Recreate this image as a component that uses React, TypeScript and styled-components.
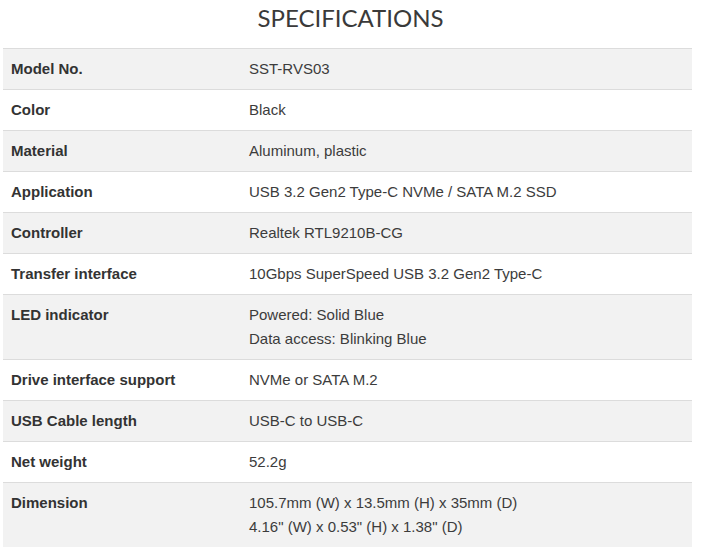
import React from "react";
import styled, { createGlobalStyle } from "styled-components";

const Global = createGlobalStyle`
  html, body { margin: 0; padding: 0; background: #fff; }
  body { font-family: "Liberation Sans", Arial, sans-serif; }
`;

const Page = styled.div`
  width: 701px;
  padding: 3px 9px 0 3px;
  box-sizing: border-box;
`;

const Title = styled.h2`
  margin: 0 0 16px 0;
  font-family: Lato, sans-serif;
  font-weight: 400;
  font-size: 24px;
  line-height: 29px;
  color: #3a3a3a;
  text-align: center;
  padding-left: 6px;
`;

const Table = styled.div`
  width: 689px;
  display: flex;
  flex-direction: column;
`;

const Row = styled.div<{ $shade: boolean }>`
  display: grid;
  grid-template-columns: 238px 1fr;
  border-top: 1px solid #dcdcdc;
  background: ${(p) => (p.$shade ? "#f2f2f2" : "#ffffff")};
`;

const Label = styled.div`
  padding: 8px;
  font-size: 15px;
  line-height: 24px;
  font-weight: 700;
  color: #333;
`;

const Value = styled.div`
  padding: 8px;
  font-size: 15px;
  line-height: 24px;
  color: #3c3c3c;
  display: flex;
  flex-direction: column;
`;

const specs: [string, string[]][] = [
  ["Model No.", ["SST-RVS03"]],
  ["Color", ["Black"]],
  ["Material", ["Aluminum, plastic"]],
  ["Application", ["USB 3.2 Gen2 Type-C NVMe / SATA M.2 SSD"]],
  ["Controller", ["Realtek RTL9210B-CG"]],
  ["Transfer interface", ["10Gbps SuperSpeed USB 3.2 Gen2 Type-C"]],
  ["LED indicator", ["Powered: Solid Blue", "Data access: Blinking Blue"]],
  ["Drive interface support", ["NVMe or SATA M.2"]],
  ["USB Cable length", ["USB-C to USB-C"]],
  ["Net weight", ["52.2g"]],
  [
    "Dimension",
    ['105.7mm (W) x 13.5mm (H) x 35mm (D)', '4.16" (W) x 0.53" (H) x 1.38" (D)'],
  ],
];

export default function App() {
  return (
    <Page>
      <Global />
      <Title>SPECIFICATIONS</Title>
      <Table>
        {specs.map(([label, values], i) => (
          <Row key={label} $shade={i % 2 === 0}>
            <Label>{label}</Label>
            <Value>
              {values.map((v) => (
                <span key={v}>{v}</span>
              ))}
            </Value>
          </Row>
        ))}
      </Table>
    </Page>
  );
}
